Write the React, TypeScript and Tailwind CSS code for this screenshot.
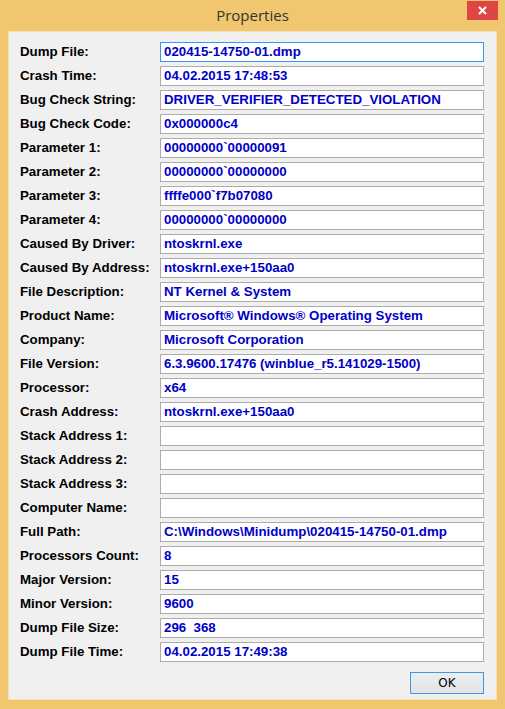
import React from "react";

type Field = { label: string; value: string };

const fields: Field[] = [
  { label: "Dump File:", value: "020415-14750-01.dmp" },
  { label: "Crash Time:", value: "04.02.2015 17:48:53" },
  { label: "Bug Check String:", value: "DRIVER_VERIFIER_DETECTED_VIOLATION" },
  { label: "Bug Check Code:", value: "0x000000c4" },
  { label: "Parameter 1:", value: "00000000`00000091" },
  { label: "Parameter 2:", value: "00000000`00000000" },
  { label: "Parameter 3:", value: "ffffe000`f7b07080" },
  { label: "Parameter 4:", value: "00000000`00000000" },
  { label: "Caused By Driver:", value: "ntoskrnl.exe" },
  { label: "Caused By Address:", value: "ntoskrnl.exe+150aa0" },
  { label: "File Description:", value: "NT Kernel & System" },
  { label: "Product Name:", value: "Microsoft® Windows® Operating System" },
  { label: "Company:", value: "Microsoft Corporation" },
  { label: "File Version:", value: "6.3.9600.17476 (winblue_r5.141029-1500)" },
  { label: "Processor:", value: "x64" },
  { label: "Crash Address:", value: "ntoskrnl.exe+150aa0" },
  { label: "Stack Address 1:", value: "" },
  { label: "Stack Address 2:", value: "" },
  { label: "Stack Address 3:", value: "" },
  { label: "Computer Name:", value: "" },
  { label: "Full Path:", value: "C:\\Windows\\Minidump\\020415-14750-01.dmp" },
  { label: "Processors Count:", value: "8" },
  { label: "Major Version:", value: "15" },
  { label: "Minor Version:", value: "9600" },
  { label: "Dump File Size:", value: "296\u00a0\u00a0368" },
  { label: "Dump File Time:", value: "04.02.2015 17:49:38" },
];

const FieldRow = ({ field, focused }: { field: Field; focused: boolean }) => {
  return (
    <div className="flex items-center h-[20px]">
      <div className="w-[140px] shrink-0 text-[13.3px] font-bold text-black leading-none whitespace-nowrap">
        {field.label}
      </div>
      <div
        className={
          focused
            ? "flex items-center w-[324px] h-[20px] bg-white border border-[#3399ff] px-[3px]"
            : "flex items-center w-[324px] h-[20px] bg-white border border-[#acacac] px-[3px]"
        }
      >
        <span className="text-[13.3px] font-bold text-[#0000c8] leading-none whitespace-nowrap">
          {field.value}
        </span>
      </div>
    </div>
  );
};

export default function App() {
  return (
    <div
      className="w-[505px] h-[709px] bg-[#f0c66e] flex flex-col overflow-hidden"
      style={{ fontFamily: '"Liberation Sans", Arial, sans-serif' }}
    >
      {/* title bar */}
      <div className="relative h-[31px] shrink-0 flex items-center justify-center">
        <span
          className="text-[15px] text-[#333333] pb-[1px]"
          style={{ fontFamily: '"Open Sans", "Noto Sans", sans-serif' }}
        >
          Properties
        </span>
        <button className="absolute top-[1px] right-[7px] w-[31px] h-[19px] bg-[#e04545] flex items-center justify-center">
          <svg width="9" height="9" viewBox="0 0 9 9">
            <path d="M1 1 L8 8 M8 1 L1 8" stroke="#ffffff" strokeWidth="2" />
          </svg>
        </button>
      </div>

      {/* client area */}
      <div className="mx-[8px] h-[669px] bg-[#f0f0f0] border border-[#f7e2b6] pl-[11px] pt-[10px] flex flex-col">
        <div className="flex flex-col gap-[4px]">
          {fields.map((f, i) => (
            <FieldRow key={f.label} field={f} focused={i === 0} />
          ))}
        </div>
        <div className="flex justify-end mt-[10px] w-[464px]">
          <button className="w-[74px] h-[22px] border border-[#3c9ae8] bg-gradient-to-b from-[#eeeeee] to-[#e2e2e2] flex items-center justify-center">
            <span
              className="text-[12px] text-black"
              style={{ fontFamily: '"DejaVu Sans", sans-serif' }}
            >
              OK
            </span>
          </button>
        </div>
      </div>
    </div>
  );
}
